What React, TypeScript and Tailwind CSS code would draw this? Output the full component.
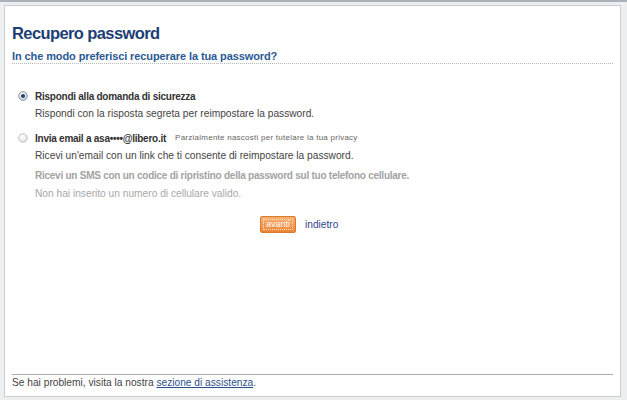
import React from 'react';

const font = "font-['Liberation_Sans',Arial,sans-serif]";

function Radio({ checked }: { checked?: boolean }) {
  return (
    <svg width="10" height="10" viewBox="0 0 10 10" className="shrink-0">
      <defs>
        <radialGradient id={checked ? 'rc' : 'ru'} cx="40%" cy="35%" r="70%">
          <stop offset="0%" stopColor="#ffffff" />
          <stop offset="100%" stopColor={checked ? '#c9d3de' : '#dcdfe2'} />
        </radialGradient>
      </defs>
      <circle cx="5" cy="5" r="4.3" fill={`url(#${checked ? 'rc' : 'ru'})`} stroke={checked ? '#7f8a97' : '#b9bec4'} strokeWidth="0.9" />
      {checked && <circle cx="5" cy="5" r="2.1" fill="#24466e" />}
    </svg>
  );
}

export default function App() {
  return (
    <div className={`w-[627px] h-[400px] bg-[#eceeef] border-t-[2px] border-[#a8b2b8] pt-[3px] pl-[4px] pr-[6px] pb-[3px] ${font}`}>
      <div className="h-full bg-white border border-[#c8ced3] flex flex-col px-[7px] pt-[17px] pb-[5px]">
        {/* ── Titolo ── */}
        <h1 className="text-[16.5px] leading-[21px] font-bold tracking-[-0.6px] text-[#1e3e76]">
          Recupero password
        </h1>
        <h2 className="mt-[5px] text-[11px] leading-[14px] font-bold tracking-[-0.1px] text-[#2b5a93] border-b border-dotted border-[#b5b9bd]">
          In che modo preferisci recuperare la tua password?
        </h2>

        {/* ── Opzioni ── */}
        <div className="mt-[23px] pl-[6px] text-[#333]">
          <div className="flex items-center gap-[7px] h-[18px]">
            <Radio checked />
            <span className="text-[10px] font-bold tracking-[-0.25px] text-[#333]">Rispondi alla domanda di sicurezza</span>
          </div>
          <div className="pl-[17px] text-[10.2px] leading-[18px] text-[#444]">
            Rispondi con la risposta segreta per reimpostare la password.
          </div>

          <div className="mt-[6px] flex items-center gap-[7px] h-[18px]">
            <Radio />
            <span className="text-[10px] font-bold tracking-[-0.25px] text-[#333]">Invia email a asa••••@libero.it</span>
            <span className="ml-[2px] text-[8px] tracking-[0.25px] text-[#666]">Parzialmente nascosti per tutelare la tua privacy</span>
          </div>
          <div className="pl-[17px] text-[10.2px] leading-[18px] text-[#444]">
            Ricevi un'email con un link che ti consente di reimpostare la password.
          </div>

          <div className="mt-[2px] pl-[17px] text-[10px] leading-[18px] font-bold tracking-[-0.25px] text-[#a3a3a3]">
            Ricevi un SMS con un codice di ripristino della password sul tuo telefono cellulare.
          </div>
          <div className="pl-[17px] text-[10.2px] leading-[18px] text-[#a8a8a8]">
            Non hai inserito un numero di cellulare valido.
          </div>
        </div>

        {/* ── Azioni ── */}
        <div className="mt-[13px] flex items-center pl-[248px] gap-[9px]">
          <button className="w-[36px] h-[17px] rounded-[2px] border border-[#dc7a2e] bg-gradient-to-b from-[#f9b070] to-[#ec8531] p-[2px] flex">
            <span className="flex-1 flex items-center justify-center border border-dotted border-[#fde3cc] text-[9px] leading-none text-white">
              avanti
            </span>
          </button>
          <span className="text-[10.2px] text-[#34468a]">indietro</span>
        </div>

        {/* ── Footer ── */}
        <div className="mt-auto border-t border-[#ababab] text-[10.2px] leading-[16px] text-[#444]">
          Se hai problemi, visita la nostra{' '}
          <a className="underline text-[#2b4f8c]">sezione di assistenza</a>.
        </div>
      </div>
    </div>
  );
}
